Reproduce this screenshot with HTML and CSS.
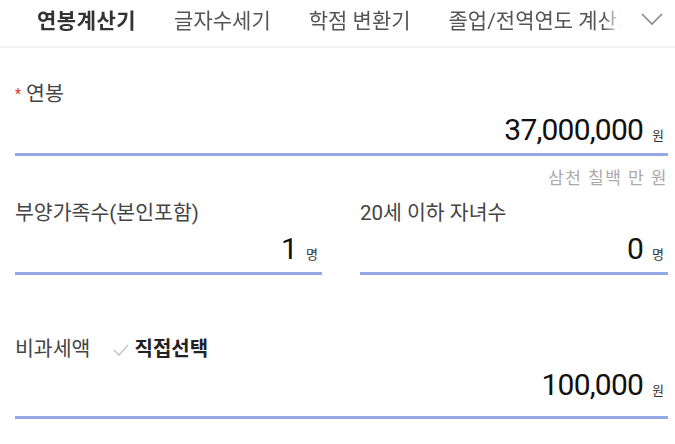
FILE: index.html
```html
<!DOCTYPE html>
<html lang="ko">
  <head>
    <meta charset="UTF-8" />
    <title>연봉계산기</title>
    <link rel="stylesheet" href="styles.css">
  </head>
  <body>
    <nav class="tabs">
      <div class="tab-list">
        <span class="tab active">연봉계산기</span>
        <span class="tab">글자수세기</span>
        <span class="tab">학점 변환기</span>
        <span class="tab">졸업/전역연도 계산기</span>
      </div>
      <button class="tab-more" aria-label="더보기">
        <svg width="24" height="14" viewBox="0 0 24 14">
          <path d="M2 2 L12 12 L22 2" fill="none" stroke="#888" stroke-width="1.6" />
        </svg>
      </button>
    </nav>

    <main class="form">
      <!-- 연봉 -->
      <div class="field">
        <div class="field-label"><span class="required">*</span> 연봉</div>
        <div class="field-input">
          <span class="value">37,000,000</span>
          <span class="unit">원</span>
        </div>
        <div class="field-hint">삼천 칠백 만 원</div>
      </div>

      <!-- 가족수 -->
      <div class="field-row">
        <div class="field">
          <div class="field-label">부양가족수(본인포함)</div>
          <div class="field-input">
            <span class="value">1</span>
            <span class="unit">명</span>
          </div>
        </div>
        <div class="field">
          <div class="field-label">20세 이하 자녀수</div>
          <div class="field-input">
            <span class="value">0</span>
            <span class="unit">명</span>
          </div>
        </div>
      </div>

      <!-- 비과세액 -->
      <div class="field tax-free">
        <div class="field-label">
          비과세액
          <label class="direct-pick">
            <svg width="18" height="14" viewBox="0 0 18 14">
              <path d="M2 7 L7 12 L16 2" fill="none" stroke="#c8c8c8" stroke-width="1.6" />
            </svg>
            직접선택
          </label>
        </div>
        <div class="field-input">
          <span class="value">100,000</span>
          <span class="unit">원</span>
        </div>
      </div>
    </main>
  </body>
</html>
```

FILE: styles.css
```css
body {
  margin: 0;
  background: #fff;
  color: #222;
  font-family: Roboto, "Noto Sans CJK KR", sans-serif;
}
.tabs {
  display: flex;
  align-items: center;
  height: 38px;
  padding: 0 0 8px 37px;
  border-bottom: 2px solid #f2f2f2;
  overflow: hidden;
}
.tab-list {
  display: flex;
  gap: 38px;
  width: 584px;
  overflow: hidden;
  white-space: nowrap;
  -webkit-mask-image: linear-gradient(to right, #000 97%, transparent);
  mask-image: linear-gradient(to right, #000 97%, transparent);
}
.tab {
  font-size: 21px;
  color: #555;
  flex-shrink: 0;
}
.tab.active {
  color: #333;
  font-weight: bold;
  letter-spacing: 0.5px;
}
.tab-more {
  margin-left: auto;
  margin-right: 11px;
  border: none;
  background: none;
  padding: 0;
  display: flex;
}
.form {
  padding: 32px 7px 0 15px;
}
.field-label {
  font-size: 20.5px;
  color: #444;
  line-height: 28px;
}
.required {
  color: #d33;
  font-size: 14px;
  vertical-align: top;
}
.field-input {
  display: flex;
  justify-content: flex-end;
  align-items: baseline;
  gap: 9px;
  border-bottom: 3px solid #94a8e8;
  padding: 4px 4px 6px 0;
}
.value {
  font-size: 30px;
  color: #111;
  letter-spacing: -0.8px;
}
.unit {
  font-size: 13px;
  color: #333;
}
.field-hint {
  text-align: right;
  color: #aaa;
  font-size: 17px;
  letter-spacing: 1.5px;
  margin-top: 8px;
}
.field-row {
  display: grid;
  grid-template-columns: 307px 308px;
  justify-content: space-between;
  margin-top: 10px;
}
.tax-free {
  margin-top: 60px;
}
.tax-free .field-input {
  padding-bottom: 14px;
}
.direct-pick {
  margin-left: 16px;
  color: #222;
  font-weight: bold;
  font-size: 20px;
}
.direct-pick svg {
  vertical-align: -1px;
}
```
